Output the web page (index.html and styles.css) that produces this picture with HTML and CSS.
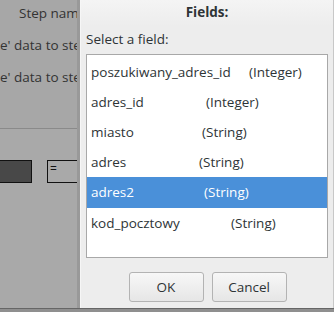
FILE: index.html
```html
<!DOCTYPE html>
<html>
<head>
<meta charset="utf-8">
<link rel="stylesheet" href="styles.css">
</head>
<body>
<div class="screen">
  <div class="backdrop">
    <div class="bg-top">
      <div class="bg-header">Step name</div>
      <div class="bg-line">e' data to step</div>
      <div class="bg-line">e' data to step</div>
    </div>
    <div class="bg-bottom">
      <div class="box-dark"></div>
      <div class="box-eq">=</div>
    </div>
  </div>
  <div class="dialog">
    <div class="title">Fields:</div>
    <div class="body">
      <div class="label">Select a field:</div>
      <div class="list">
        <div class="row"><span class="name" style="width:158px">poszukiwany_adres_id</span><span class="type">(Integer)</span></div>
        <div class="row"><span class="name" style="width:115px">adres_id</span><span class="type">(Integer)</span></div>
        <div class="row"><span class="name" style="width:111px">miasto</span><span class="type">(String)</span></div>
        <div class="row"><span class="name" style="width:108px">adres</span><span class="type">(String)</span></div>
        <div class="row selected"><span class="name" style="width:113px">adres2</span><span class="type">(String)</span></div>
        <div class="row"><span class="name" style="width:140px">kod_pocztowy</span><span class="type">(String)</span></div>
      </div>
      <div class="buttons">
        <div class="btn">OK</div>
        <div class="btn">Cancel</div>
      </div>
    </div>
  </div>
</div>
<div class="footer"></div>
</body>
</html>
```
FILE: styles.css
```css
html, body {
  margin: 0;
  padding: 0;
  width: 334px;
  height: 312px;
  overflow: hidden;
  background: #a9a9a9;
  font-family: "Open Sans", "DejaVu Sans", sans-serif;
  font-size: 13.5px;
  color: #2e3436;
}
.screen {
  display: flex;
  height: 308px;
}
.backdrop {
  width: 77px;
  flex: none;
  overflow: hidden;
  background: #a9a9a9;
  border-right: 3px solid #999999;
  display: flex;
  flex-direction: column;
}
.bg-top {
  height: 129px;
  border-bottom: 1px solid #8a8a8a;
  box-sizing: border-box;
  background: #a7a7a7;
}
.bg-header {
  white-space: nowrap;
  padding: 3px 0 0 19px;
  height: 20px;
  line-height: 20px;
  color: #333;
}
.bg-line {
  white-space: nowrap;
  line-height: 20px;
  margin-top: 12px;
  color: #333;
}
.bg-bottom {
  flex: 1;
  display: flex;
  padding-top: 31px;
  gap: 15px;
}
.box-dark {
  flex: none;
  width: 31px;
  height: 21px;
  background: #484848;
  border: 1px solid #111;
  border-left: none;
}
.box-eq {
  flex: none;
  width: 40px;
  height: 21px;
  border: 1px solid #111;
  border-right: none;
  line-height: 16px;
  padding-left: 2px;
  color: #111;
  font-size: 12px;
}
.dialog {
  flex: 1;
  background: #ededed;
  border-left: 1px solid #f6f6f6;
  border-right: 1px solid #c8c8c8;
  display: flex;
  flex-direction: column;
}
.title {
  height: 26px;
  line-height: 24px;
  text-align: center;
  font-weight: bold;
  color: #2e3436;
  background: linear-gradient(#f4f4f4, #ededed);
  flex: none;
}
.body {
  padding: 4px 5px 0 5px;
  flex: 1;
  display: flex;
  flex-direction: column;
}
.label {
  line-height: 18px;
  height: 24px;
}
.list {
  background: #ffffff;
  border: 1px solid #a8a8a8;
  height: 204px;
  padding-top: 2px;
  box-sizing: border-box;
}
.row {
  display: flex;
  height: 30px;
  line-height: 30px;
  padding-left: 4px;
  white-space: nowrap;
}
.row.selected {
  background: #4a90d9;
  color: #ffffff;
  height: 31px;
}
.name {
  flex: none;
}
.buttons {
  display: flex;
  justify-content: center;
  gap: 8px;
  margin-top: 14px;
  padding-left: 1px;
}
.btn {
  width: 73px;
  height: 28px;
  line-height: 28px;
  text-align: center;
  border: 1px solid #b3b3b3;
  border-radius: 3px;
  background: linear-gradient(#f7f7f7, #e6e6e6);
  color: #2e3436;
}
.footer {
  height: 4px;
  border-top: 1px solid #666;
  background: #8f8f8f;
}
```
